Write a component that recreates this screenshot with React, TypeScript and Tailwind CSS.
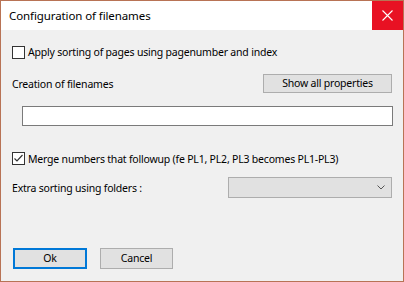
import React from "react";

const font = { fontFamily: '"Noto Sans", "Open Sans", sans-serif' };

function Check({ checked }: { checked?: boolean }) {
  return (
    <div className="w-[13px] h-[13px] border border-[#333333] bg-white flex items-center justify-center shrink-0">
      {checked && (
        <svg width="11" height="11" viewBox="0 0 11 11">
          <polyline points="1.5,5.5 4,8 9.5,2" fill="none" stroke="#333333" strokeWidth="1.2" />
        </svg>
      )}
    </div>
  );
}

export default function App() {
  return (
    <div
      className="w-[404px] h-[282px] border border-[#b87355] bg-[#f0f0f0] flex flex-col text-[10.5px] tracking-[-0.2px] text-black overflow-hidden"
      style={{ fontFamily: '"Noto Sans", "Open Sans", sans-serif' }}
    >
      <div className="h-[29px] bg-white flex items-center shrink-0">
        <div className="pl-[8px] flex-1 text-[11.5px] tracking-[-0.1px] leading-[16px]">Configuration of filenames</div>
        <div className="w-[31px] h-[29px] bg-[#e81123] flex items-center justify-center">
          <svg width="11" height="11" viewBox="0 0 11 11">
            <path d="M0.5 0.5 L10.5 10.5 M10.5 0.5 L0.5 10.5" stroke="white" strokeWidth="1.1" />
          </svg>
        </div>
      </div>
      <div className="flex flex-col px-[11px]">
        <div className="mt-[14px] h-[16px] flex items-center gap-[3px]">
          <Check />
          <span className="leading-[16px]">Apply sorting of pages using pagenumber and index</span>
        </div>
        <div className="mt-[14px] h-[19px] flex items-center justify-between">
          <span className="leading-[16px]">Creation of filenames</span>
          <button className="w-[129px] h-[19px] bg-[#e1e1e1] border border-[#adadad] text-[10.5px] tracking-[-0.2px] leading-[15px]" style={font}>
            Show all properties
          </button>
        </div>
        <div className="mt-[13px] ml-[10px] w-[371px] h-[20px] bg-white border border-[#7a7a7a]" />
        <div className="mt-[24px] h-[17px] flex items-center gap-[3px]">
          <Check checked />
          <span className="leading-[16px]">Merge numbers that followup (fe PL1, PL2, PL3 becomes PL1-PL3)</span>
        </div>
        <div className="mt-[10px] h-[21px] flex items-center">
          <span className="leading-[16px] w-[217px]">Extra sorting using folders :</span>
          <div className="w-[164px] h-[21px] bg-[#e1e1e1] border border-[#adadad] flex items-center justify-end pr-[6px]">
            <svg width="8" height="5" viewBox="0 0 8 5">
              <polyline points="0.5,0.5 4,4 7.5,0.5" fill="none" stroke="#555555" strokeWidth="1" />
            </svg>
          </div>
        </div>
        <div className="mt-[50px] flex items-center">
          <button className="ml-[1px] w-[74px] h-[21px] bg-[#e1e1e1] border-2 border-[#0078d7] text-[10.5px] tracking-[-0.2px] leading-[15px]" style={font}>
            Ok
          </button>
          <button className="ml-[13px] w-[73px] h-[21px] bg-[#e1e1e1] border border-[#adadad] text-[10.5px] tracking-[-0.2px] leading-[15px]" style={font}>
            Cancel
          </button>
        </div>
      </div>
    </div>
  );
}
